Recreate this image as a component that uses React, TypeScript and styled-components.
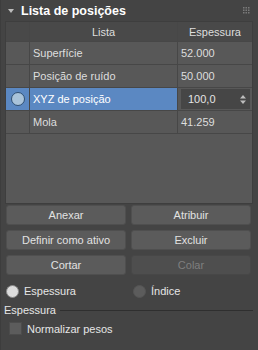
import styled, { createGlobalStyle } from "styled-components";

const GlobalStyle = createGlobalStyle`
  html, body {
    margin: 0;
    padding: 0;
    background: #444444;
  }
  body {
    font-family: "Liberation Sans", Arial, sans-serif;
    font-size: 11px;
    color: #dcdcdc;
  }
`;

const Panel = styled.div`
  width: 258px;
  height: 350px;
  display: flex;
  flex-direction: column;
  box-sizing: border-box;
  border-left: 1px solid #3d3d3d;
  overflow: hidden;
`;

const TitleBar = styled.div`
  height: 21px;
  display: flex;
  align-items: center;
  padding: 0 8px 0 7px;
  gap: 7px;
`;

const Caret = styled.span`
  width: 0;
  height: 0;
  border-left: 3px solid transparent;
  border-right: 3px solid transparent;
  border-top: 4px solid #bdbdbd;
`;

const Title = styled.span`
  flex: 1;
  font-weight: bold;
  font-size: 12.5px;
  color: #ffffff;
`;

const Table = styled.div`
  margin: 0 5px 0 4px;
  height: 183px;
  box-sizing: border-box;
  border: 1px solid #3e3e3e;
  background: #585858;
  display: flex;
  flex-direction: column;
`;

const Grid = styled.div<{ $head?: boolean; $height: number }>`
  display: grid;
  grid-template-columns: 24px 148px 1fr;
  height: ${(p) => p.$height}px;
  background: ${(p) => (p.$head ? "#494949" : "transparent")};
  border-bottom: 1px solid #474747;
`;

const Cell = styled.div<{ $center?: boolean; $selected?: boolean; $last?: boolean }>`
  display: flex;
  align-items: center;
  justify-content: ${(p) => (p.$center ? "center" : "flex-start")};
  padding-left: ${(p) => (p.$center ? 0 : 3)}px;
  border-right: ${(p) => (p.$last ? "none" : "1px solid #474747")};
  background: ${(p) => (p.$selected ? "#5b88c2" : "transparent")};
  color: ${(p) => (p.$selected ? "#ffffff" : "#dedede")};
  white-space: nowrap;
  min-width: 0;
`;

const Dot = styled.span`
  width: 12px;
  height: 12px;
  border-radius: 50%;
  background: #a9c3da;
  border: 1px solid #2f4f72;
`;

const Editor = styled.div`
  flex: 1;
  align-self: stretch;
  margin: 1px 2px 1px 0;
  background: #464646;
  display: flex;
  align-items: center;
  justify-content: space-between;
  padding: 0 4px 0 7px;
  color: #e4e4e4;
`;

const Buttons = styled.div`
  display: grid;
  grid-template-columns: 120px 120px;
  gap: 5px;
  margin: 1px 0 0 5px;
`;

const Button = styled.div<{ $disabled?: boolean }>`
  height: 20px;
  border-radius: 3px;
  background: ${(p) => (p.$disabled ? "#4e4e4e" : "#5b5b5b")};
  color: ${(p) => (p.$disabled ? "#7f7f7f" : "#e2e2e2")};
  display: flex;
  align-items: center;
  justify-content: center;
  border: 1px solid ${(p) => (p.$disabled ? "#474747" : "#4f4f4f")};
  box-sizing: border-box;
`;

const RadioRow = styled.div`
  display: grid;
  grid-template-columns: 127px 1fr;
  margin: 8px 0 0 5px;
  height: 16px;
`;

const Radio = styled.label`
  display: flex;
  align-items: center;
  gap: 5px;
  color: #e6e6e6;
`;

const RadioCircle = styled.span<{ $on?: boolean }>`
  width: 13px;
  height: 13px;
  border-radius: 50%;
  background: ${(p) => (p.$on ? "#dcdcdc" : "#5c5c5c")};
  border: 1px solid ${(p) => (p.$on ? "#8a8a8a" : "#555555")};
  box-sizing: border-box;
`;

const GroupHeader = styled.div`
  display: flex;
  align-items: center;
  gap: 4px;
  margin: 5px 5px 0 3px;
  color: #e6e6e6;
  &::after {
    content: "";
    flex: 1;
    height: 1px;
    background: #2f2f2f;
  }
`;

const CheckRow = styled.label`
  display: flex;
  align-items: center;
  gap: 5px;
  margin: 6px 0 0 8px;
  color: #e6e6e6;
`;

const Box = styled.span`
  width: 13px;
  height: 13px;
  background: #5c5c5c;
  border: 1px solid #4c4c4c;
  box-sizing: border-box;
`;

const rows = [
  { name: "Superfície", value: "52.000" },
  { name: "Posição de ruído", value: "50.000" },
  { name: "XYZ de posição", value: "100,0", selected: true },
  { name: "Mola", value: "41.259" },
];

function Grip() {
  const dots = [0, 1, 2].flatMap((r) => [0, 1, 2].map((c) => [c, r]));
  return (
    <svg width="7" height="7" viewBox="0 0 7 7">
      {dots.map(([c, r]) => (
        <rect key={`${c}-${r}`} x={c * 2.5} y={r * 2.5} width="1.5" height="1.5" fill="#7a7a7a" />
      ))}
    </svg>
  );
}

function Spinner() {
  return (
    <svg width="6" height="9" viewBox="0 0 6 9">
      <path d="M3 0 L6 3.5 H0 Z M0 5.5 H6 L3 9 Z" fill="#bdbdbd" />
    </svg>
  );
}

export default function App() {
  return (
    <Panel>
      <GlobalStyle />
      <TitleBar>
        <Caret />
        <Title>Lista de posições</Title>
        <Grip />
      </TitleBar>
      <Table>
        <Grid $head $height={19}>
          <Cell />
          <Cell $center>Lista</Cell>
          <Cell $center $last>Espessura</Cell>
        </Grid>
        {rows.map((row) => (
          <Grid key={row.name} $height={22}>
            <Cell $center $selected={row.selected}>
              {row.selected && <Dot />}
            </Cell>
            <Cell $selected={row.selected}>{row.name}</Cell>
            <Cell $last>
              {row.selected ? (
                <Editor>
                  <span>{row.value}</span>
                  <Spinner />
                </Editor>
              ) : (
                row.value
              )}
            </Cell>
          </Grid>
        ))}
      </Table>
      <Buttons>
        <Button>Anexar</Button>
        <Button>Atribuir</Button>
        <Button>Definir como ativo</Button>
        <Button>Excluir</Button>
        <Button>Cortar</Button>
        <Button $disabled>Colar</Button>
      </Buttons>
      <RadioRow>
        <Radio>
          <RadioCircle $on />
          Espessura
        </Radio>
        <Radio>
          <RadioCircle />
          Índice
        </Radio>
      </RadioRow>
      <GroupHeader>Espessura</GroupHeader>
      <CheckRow>
        <Box />
        Normalizar pesos
      </CheckRow>
    </Panel>
  );
}
